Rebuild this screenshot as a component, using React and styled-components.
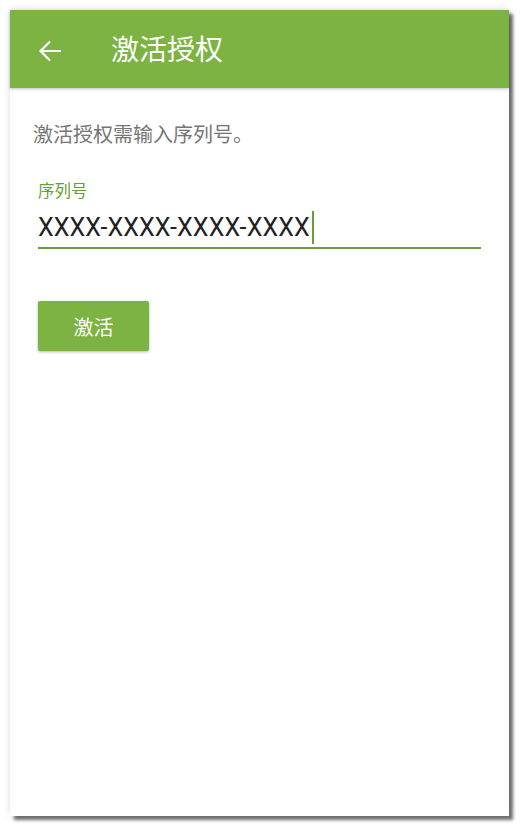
import React, { useState } from 'react';
import styled, { createGlobalStyle } from 'styled-components';

const GlobalStyle = createGlobalStyle`
  html, body {
    margin: 0;
    padding: 0;
    background: #ffffff;
  }
  body {
    font-family: Roboto, "Noto Sans CJK SC", sans-serif;
  }
`;

const Page = styled.div`
  width: 520px;
  height: 828px;
  padding: 10px 11px 12px 10px;
  box-sizing: border-box;
`;

const Screen = styled.div`
  width: 499px;
  height: 806px;
  background: #ffffff;
  display: flex;
  flex-direction: column;
  box-shadow: 4px 4px 3px rgba(0, 0, 0, 0.55), 0 0 8px rgba(0, 0, 0, 0.12);
`;

const AppBar = styled.header`
  height: 78px;
  flex-shrink: 0;
  background: #7cb342;
  display: flex;
  align-items: center;
  padding-left: 28px;
  box-shadow: 0 1px 3px rgba(0, 0, 0, 0.25);
  position: relative;
  z-index: 1;
`;

const BackButton = styled.button`
  width: 24px;
  height: 24px;
  padding: 0;
  border: none;
  background: transparent;
  display: flex;
  align-items: center;
  justify-content: center;
  cursor: pointer;
  margin-right: 49px;
  margin-top: 3px;
`;

const Title = styled.h1`
  margin: 0 0 2px 0;
  color: #ffffff;
  font-size: 28px;
  line-height: 36px;
  font-weight: 400;
  font-family: "Noto Sans CJK SC", sans-serif;
`;

const Content = styled.main`
  padding: 32px 28px 0 23px;
  display: flex;
  flex-direction: column;
`;

const Hint = styled.p`
  margin: 0;
  font-size: 20px;
  line-height: 28px;
  color: #757575;
  font-family: "Noto Sans CJK SC", sans-serif;
`;

const Field = styled.label`
  display: flex;
  flex-direction: column;
  margin: 32px 0 0 5px;
`;

const FieldLabel = styled.span`
  font-size: 16.5px;
  line-height: 20px;
  color: #689f38;
  font-family: "Noto Sans CJK SC", sans-serif;
`;

const InputRow = styled.div`
  display: flex;
  align-items: center;
  height: 40px;
  margin-top: 7px;
  border-bottom: 2px solid #689f38;
`;

const Value = styled.span`
  font-family: Roboto, sans-serif;
  font-size: 25px;
  color: #212121;
  letter-spacing: 0.1px;
`;

const Caret = styled.span`
  width: 2px;
  height: 33px;
  margin-left: 2px;
  background: #689f38;
`;

const ActivateButton = styled.button`
  align-self: flex-start;
  margin: 52px 0 0 5px;
  width: 111px;
  height: 50px;
  border: none;
  border-radius: 2px;
  background: #7cb342;
  color: #ffffff;
  font-size: 20px;
  font-family: "Noto Sans CJK SC", sans-serif;
  box-shadow: 0 1px 3px rgba(0, 0, 0, 0.3);
  cursor: pointer;
`;

const ArrowIcon = () => (
  <svg width="24" height="22" viewBox="0 0 24 22">
    <path
      d="M23 11H2.5M12 1.5L2.5 11L12 20.5"
      fill="none"
      stroke="#ffffff"
      strokeWidth="2.2"
    />
  </svg>
);

export default function App() {
  const [serial] = useState('XXXX-XXXX-XXXX-XXXX');

  return (
    <Page>
      <GlobalStyle />
      <Screen>
        <AppBar>
          <BackButton aria-label="返回">
            <ArrowIcon />
          </BackButton>
          <Title>激活授权</Title>
        </AppBar>
        <Content>
          <Hint>激活授权需输入序列号。</Hint>
          <Field>
            <FieldLabel>序列号</FieldLabel>
            <InputRow>
              <Value>{serial}</Value>
              <Caret />
            </InputRow>
          </Field>
          <ActivateButton>激活</ActivateButton>
        </Content>
      </Screen>
    </Page>
  );
}
